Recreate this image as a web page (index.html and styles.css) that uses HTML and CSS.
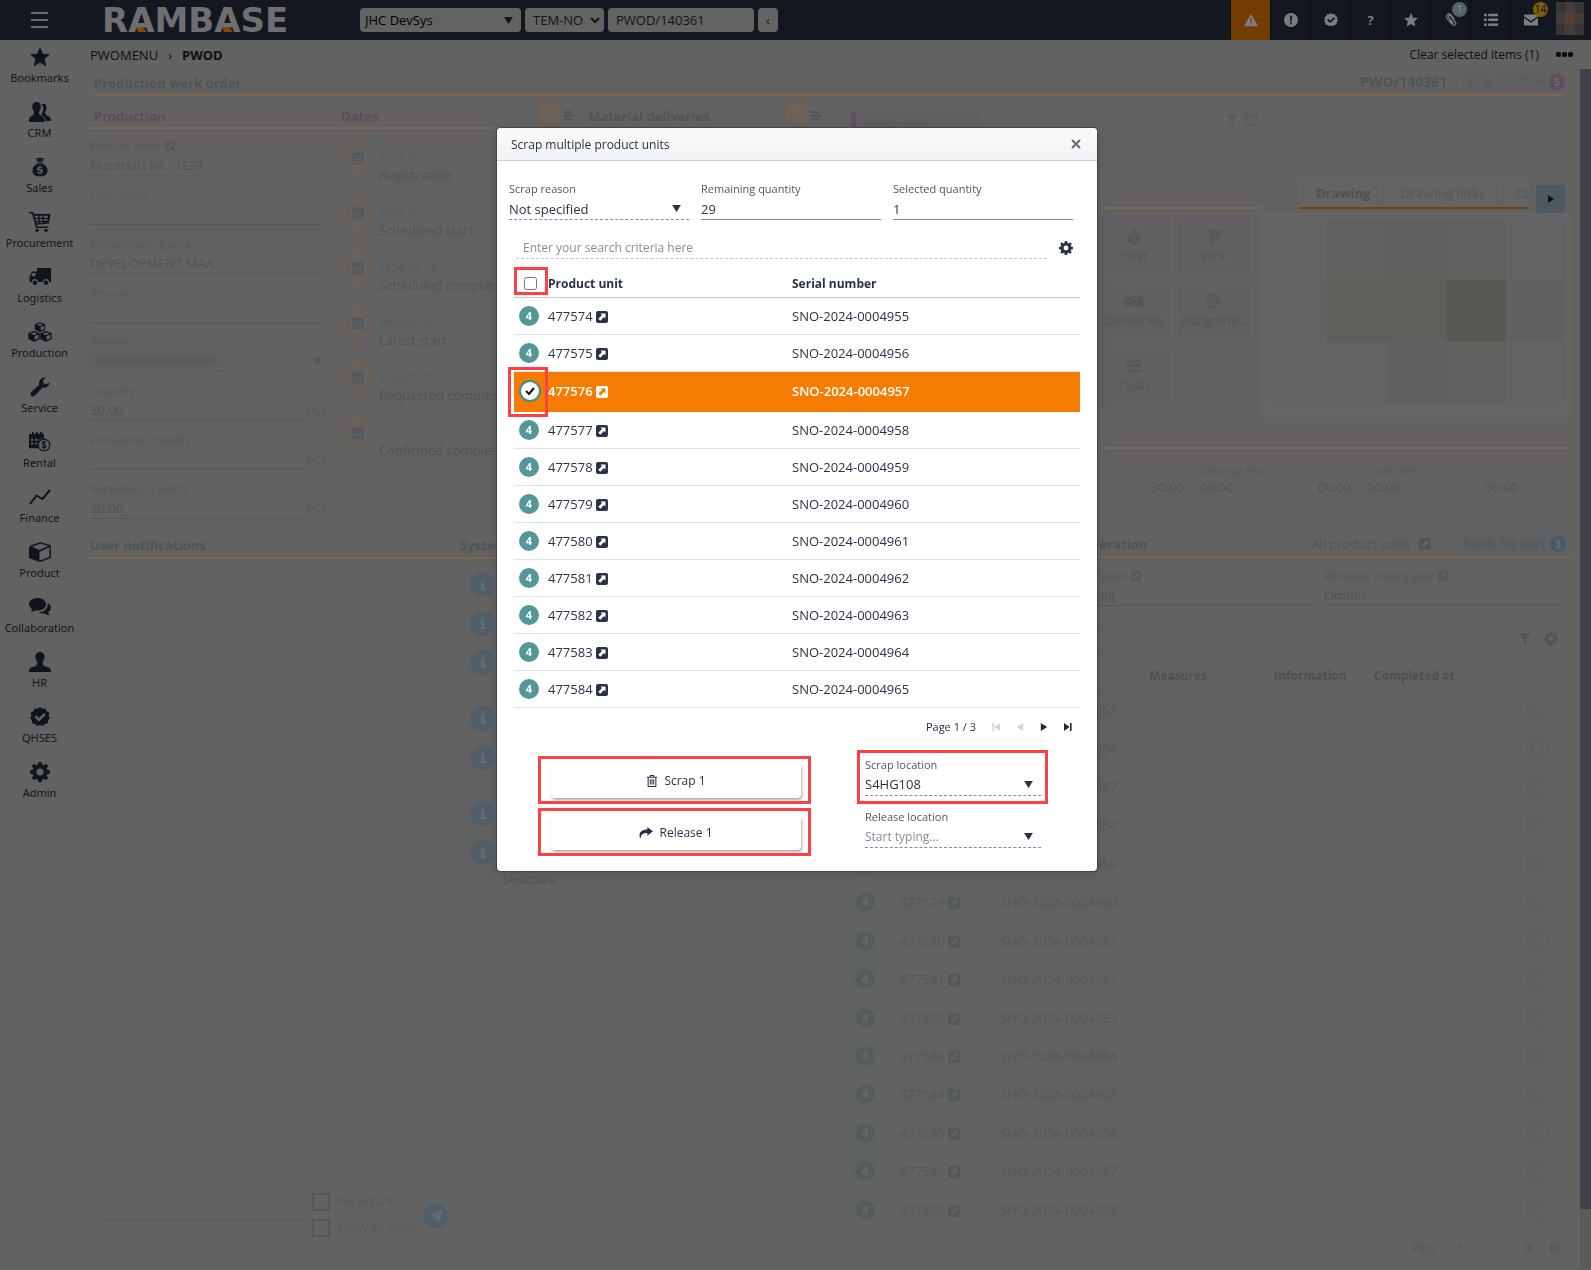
FILE: index.html
```html
<!DOCTYPE html>
<html lang="en">
<head>
<meta charset="utf-8">
<title>PWOD/140361 - RamBase</title>
<link rel="stylesheet" href="styles.css">
</head>
<body>
<svg class="sprite" aria-hidden="true">
  <symbol id="i-star" viewBox="0 0 20 20"><path d="M10 0l2.900 6.700 7.100.6-5.400 4.800 1.700 7.300L10 15.600 3.700 19.400l1.700-7.300L0 7.300l7.100-.6z"/></symbol>
  <symbol id="i-people" viewBox="0 0 22 20"><path d="M12.500 2.500c2.800-2 5.700.5 5 4-.2 1.800-1 2.700-1.300 3.500-.2 2 .3 2.600 1.800 3.500 2.400 1.200 4 1.500 4 5.500h-5.500c0-3-1-4.200-3.500-5.500-.7-.4-.6-1-.2-2 .8-1.500 1.700-3.500 1.500-5.500-.1-1.500-.8-2.600-1.800-3.500z"/><path d="M7.500 0c3 0 4.300 2 4.300 4.500 0 2.600-1.200 4-1.700 5.200-.3 2.300.4 3.200 2.400 4 2.700 1.100 3.200 2.300 3.200 6.300H0c0-4 .6-5.200 3-6.300 1.700-.8 2.200-1.700 2-4C4.300 8.500 3.200 7.100 3.200 4.500 3.200 2 4.600 0 7.500 0z"/></symbol>
  <symbol id="i-bag" viewBox="0 0 16 20"><path d="M3.500.5l2 1 2.500-1 2.500 1 2-1-2 4h-5zM5.300 5.200h5.400v1H5.300z"/><path fill-rule="evenodd" d="M5.300 6.800h5.400C13.500 8 15.500 10.500 15.500 13.500c0 3.500-2.200 6-7.500 6S.5 17 .5 13.500C.5 10.500 2.500 8 5.300 6.800zM8.500 8.500h-1v1C4.500 9.900 4.500 13 7 13.500c2 .4 2.700.8 1.500 1.700-1 .4-1.900 0-2.200-.8l-1.300.5c.4 1 1.300 1.600 2.500 1.700v1h1v-1c3-.4 3.300-3.700.6-4.300-2-.4-2.400-.8-1.600-1.500.9-.5 1.700 0 2 .7l1.200-.6c-.4-.8-1-1.400-2.200-1.500z"/></symbol>
  <symbol id="i-cart" viewBox="0 0 22 20"><path fill-rule="evenodd" d="M0 0h4l.8 2H21.500l-1.700 9.500-12 1.200.5 1.800H19.500V16H7L3 1.500H0zM5.600 3.800l.5 1.900h3.100V3.800zm5 0v1.900h3V3.800zm4.400 0v1.900h3.700l.3-1.900zM6.500 7l.4 1.700h2.300V7zm4.100 0v1.700h3V7zM15 7v1.700h3.200l.3-1.700zM7.300 10l.3 1.200 1.600-.2v-1zm3.300 0v.9l3-.3V10z"/><circle cx="8" cy="18.300" r="1.600"/><circle cx="17" cy="18.300" r="1.600"/></symbol>
  <symbol id="i-truck" viewBox="0 0 22 18"><path fill-rule="evenodd" d="M8 0h14v14h-2a3 3 0 0 0-6 0H9a3 3 0 0 0-6 0H.5V8L3 3.500h5zM3.500 5L2 8.300h4.500V5z"/><circle cx="6" cy="14.700" r="2.300"/><circle cx="17" cy="14.700" r="2.300"/></symbol>
  <symbol id="i-cubes" viewBox="0 0 26 22"><g fill="none" stroke="currentColor" stroke-width="1.400" stroke-linejoin="round"><path d="M13 .8l5 2v5.400l-5 2.300-5-2.300V2.800zM8 2.800l5 2.200 5-2.200M13 5v5.500"/><path d="M6.500 10.500l5.500 2.200v5.600l-5.500 2.700-5.700-2.700v-5.600zM.8 12.700l5.700 2.400 5.500-2.400M6.500 15v6"/><path d="M19.500 10.500l5.700 2.200v5.600L19.500 21 14 18.300v-5.600zM14 12.700l5.500 2.400 5.700-2.400M19.500 15v6"/></g><path d="M8 3l5 2v5L8 8zM1 13l5.500 2v5.500L1 18zM14 13l5.500 2v5.500L14 18z"/></symbol>
  <symbol id="i-wrench" viewBox="0 0 20 20"><path d="M19.500 5.500A5.500 5.500 0 0 1 12.500 10.500L5 18.500c-2.500 2.500-6-.8-3.700-3.400L9.200 8C8 4 11.500-.5 16 .6L13 3.500l.5 3 3 .5z"/></symbol>
  <symbol id="i-rental" viewBox="0 0 22 20"><path fill-rule="evenodd" d="M3 0h1.800v1.800H7V0h1.800v1.800H11V0h1.800v1.800H15v4.500A7 7 0 0 0 8.500 12c-.1 1.800.2 3 .8 4.200H0V2h3zM2 6.800v2h2.200v-2zm4 0v2h2.500v-2zM2 10.500v2h2.200v-2zm4 0v2h1.500v-2z"/><circle cx="15" cy="13" r="5.800" fill="none" stroke="currentColor" stroke-width="1.300"/><path d="M17 11c-.8-1.600-4-1.200-3.600.6.3 1.400 3.400.9 3.600 2.600.2 1.800-3.200 2-4 .3M15 8.800v8.400" fill="none" stroke="currentColor" stroke-width="1.200"/></symbol>
  <symbol id="i-chart" viewBox="0 0 22 16"><path d="M1 15L7.500 6.500l6 3.500L21 1" fill="none" stroke="currentColor" stroke-width="2"/></symbol>
  <symbol id="i-box" viewBox="0 0 22 20"><path d="M10.500 9.300V20L0 16V4.500z"/><path d="M1 4.500L11.500.8l9.700 2.900v11.800l-10.700 4M10.500 9l10.700-5M1 4.500L10.500 9" fill="none" stroke="currentColor" stroke-width="1.500"/></symbol>
  <symbol id="i-chat" viewBox="0 0 22 18"><path d="M8.500 0C13.500 0 17 2.800 17 6.200s-3.500 6.300-8.500 6.300c-.7 0-1.300 0-2-.2C5 13.500 3 14.200 1.500 14c1-1 1.500-2 1.500-3C1 9.800 0 8 0 6.200 0 2.800 3.500 0 8.500 0z"/><path d="M18.500 5c2 .9 3.500 2.600 3.500 4.600 0 1.800-1 3.300-2.700 4.400 0 1.200.5 2 1.500 3-2 .2-3.500-.5-5-1.600-2 .3-4.300 0-6-1.200 5.500-.2 9.700-3.700 8.700-9.200z"/></symbol>
  <symbol id="i-person" viewBox="0 0 22 20"><path d="M11 0c3.200 0 4.500 2.200 4.500 5 0 2.400-1.200 4-1.900 5.500 0 2.500.9 3.200 3 4 3.700 1.200 5.400 1.500 5.400 5.500H0c0-4 1.700-4.300 5.400-5.500 2.100-.8 3-1.500 3-4C7.700 9 6.500 7.400 6.500 5c0-2.800 1.300-5 4.500-5z"/></symbol>
  <symbol id="i-badge" viewBox="0 0 22 22"><path fill-rule="evenodd" d="M11 0l2.800 1.800 3.300-.2 1.200 3.100 2.900 1.700-.7 3.300L22 12l-2.100 2.500-.2 3.400-3.300.8L14 21l-3-1.200L8 21l-2.400-2.300-3.300-.8-.2-3.400L0 12l1.500-2.300-.7-3.300 2.900-1.700 1.200-3.100 3.300.2zM15.500 6.500L9.800 12 7 9.200l-2 2 4.800 4.700 7.700-7.400z"/></symbol>
  <symbol id="i-gear" viewBox="0 0 20 20"><path fill-rule="evenodd" d="M8.300 0h3.400l.5 2.700 1.600.7L16 1.800l2.300 2.300-1.600 2.200.7 1.700 2.600.4v3.300l-2.600.5-.7 1.600 1.600 2.200L16 18.300l-2.200-1.600-1.600.7-.5 2.600H8.300l-.5-2.600-1.600-.7L4 18.300 1.700 16l1.600-2.200-.7-1.600L0 11.700V8.400L2.600 8l.7-1.700L1.700 4.100 4 1.800l2.200 1.600 1.600-.7zM10 6.500a3.500 3.500 0 1 0 0 7 3.500 3.500 0 0 0 0-7z"/></symbol>
  <symbol id="i-link" viewBox="0 0 12 12"><path fill-rule="evenodd" d="M2 0h8a2 2 0 0 1 2 2v8a2 2 0 0 1-2 2H2a2 2 0 0 1-2-2V2a2 2 0 0 1 2-2zM4.500 2.500L6 4 2.300 7.700l2 2L8 6l1.500 1.500v-5z"/></symbol>
  <symbol id="i-cal" viewBox="0 0 14 14"><path fill-rule="evenodd" d="M2.500 0H4v1.500h2V0h2v1.500h2V0h1.500v1.500H13.500V14H.5V1.500h2zM2 5v1.500h10V5zm0 3v1.500h10V8zm0 3v1.500h10V11z"/></symbol>
  <symbol id="i-warn" viewBox="0 0 20 18"><path fill-rule="evenodd" d="M10 0l10 18H0zM8.800 6l.4 6h1.600l.4-6zm.1 7.500v2h2.200v-2z"/></symbol>
  <symbol id="i-excl" viewBox="0 0 20 20"><path fill-rule="evenodd" d="M10 0a10 10 0 1 1 0 20 10 10 0 0 1 0-20zM8.500 4l.5 8h2l.5-8zm.2 9.500v2.500h2.600v-2.500z"/></symbol>
  <symbol id="i-clip" viewBox="0 0 16 18"><path d="M10.500 12.500L5 5.500C3.500 3.500 6 2 7.300 3.500l6.200 8c2 3-1.500 6-4 3.500L3 7C.5 3 5-.5 8 2.500l4.500 6M10.500 12.500c.8 1-.7 1.700-1.300.7L6.500 9.500" fill="none" stroke="currentColor" stroke-width="1.500"/></symbol>
  <symbol id="i-list" viewBox="0 0 20 18"><path d="M0 0h4v3.500H0zM6 0h14v3.500H6zM0 7h4v3.500H0zM6 7h14v3.500H6zM0 14h4v3.500H0zM6 14h14v3.500H6z"/></symbol>
  <symbol id="i-lines" viewBox="0 0 10 10"><path d="M0 0h8v2H0zM0 3.500h10v2H0zM0 7h8v2H0z"/></symbol>
  <symbol id="i-panel" viewBox="0 0 20 20"><path fill-rule="evenodd" d="M0 0h20v20H0zM3 3v3h14V3zM3 8.500v3h14v-3zM3 14v3h14v-3z"/></symbol>
  <symbol id="i-bars" viewBox="0 0 20 20"><path fill-rule="evenodd" d="M0 0h20v20H0zM3 10v7h2.500v-7zM7.500 6v11H10V6zM12 12v5h1.500v-5zM15 3v14h2V3z"/></symbol>
  <symbol id="i-mail" viewBox="0 0 20 16"><path d="M0 0h20v2.500l-10 7-10-7zM0 4.800l10 7 10-7V16H0z"/></symbol>
  <symbol id="i-down" viewBox="0 0 10 8"><path d="M0 0h10L5 8z"/></symbol>
  <symbol id="i-play" viewBox="0 0 8 10"><path d="M0 0l8 5-8 5z"/></symbol>
  <symbol id="i-last" viewBox="0 0 10 10"><path d="M0 0l7 5-7 5zM7.500 0H9.500v10h-2z"/></symbol>
  <symbol id="i-trash" viewBox="0 0 12 14"><path d="M0 2.500h12M4 2.500V.7h4v1.800M1.500 2.500v10.800h9V2.500M4 5v6M6 5v6M8 5v6" fill="none" stroke="currentColor" stroke-width="1.200"/></symbol>
  <symbol id="i-share" viewBox="0 0 16 14"><path d="M9.500 0L16 5l-6.500 5V7C5 6.800 2.500 8.500 1.500 13.500-1 8 1.500 3 9.500 3z"/></symbol>
  <symbol id="i-filter" viewBox="0 0 12 12"><path d="M0 0h12L7.500 5.500V12L4.500 10V5.500z"/></symbol>
  <symbol id="i-open" viewBox="0 0 14 12"><path d="M7 2H1v9h9.500V7M5 7.500L12 1M8.500.8h4v4" fill="none" stroke="currentColor" stroke-width="1.500"/></symbol>
  <symbol id="i-doc" viewBox="0 0 14 14"><path d="M9 4.500V1H1v12h8v-2.500M5 7.500h8M10.500 5L13 7.500 10.500 10M3 4h3" fill="none" stroke="currentColor" stroke-width="1.300"/></symbol>
  <symbol id="i-cars" viewBox="0 0 22 14"><path fill-rule="evenodd" d="M0 6l2-3h6l1 2 1-4h8l2 4 2 1v6h-2v2h-3v-2H9v1H7v-1H3v1H1v-1H0zM11.500 2.500L11 5h7l-1-2.500zM2.500 7v1.500h3V7zM12 7.500V9h2V7.500zM18 7.500V9h2V7.500z"/></symbol>
  <symbol id="i-chev" viewBox="0 0 6 10"><path d="M1 1l4 4-4 4" fill="none" stroke="currentColor" stroke-width="2"/></symbol>
  <symbol id="i-plane" viewBox="0 0 12 12"><path d="M12 0l-2 11-3.500-1.500L5 12V8.500L10 3 3.500 8 0 6.500z"/></symbol>
  <symbol id="i-info" viewBox="0 0 8 12"><path d="M2.500 0h3v2.500h-3zM1 4h4.500v6H7v2H1v-2h1.500V6H1z"/></symbol>
</svg>

<header class="topbar">
  <button class="burger" aria-label="Menu"><span></span><span></span><span></span></button>
  <svg class="logo" viewBox="0 0 240 40" role="img" aria-label="RAMBASE"><text x="0" y="32" class="logo-text">RAMBASE</text><path class="logo-mark" d="M34 27h7l4 5h-9zM120 27h7l4 5h-9z"/></svg>
  <div class="nav-fields">
    <div class="picker"><select class="nav-input nav-system" aria-label="System"><option>JHC DevSys</option></select><svg class="ico tri"><use href="#i-down"/></svg></div>
    <div class="picker"><select class="nav-input nav-db" aria-label="Database"><option>TEM-NO</option></select><svg class="ico caret"><use href="#i-chev"/></svg></div>
    <input class="nav-input nav-path" aria-label="Path" value="PWOD/140361">
    <button class="nav-input nav-back" aria-label="Back">‹</button>
  </div>
  <nav class="tools">
    <button class="tool tool-warn" aria-label="Warnings"><svg class="ico s14"><use href="#i-warn"/></svg></button>
    <button class="tool" aria-label="Alerts"><svg class="ico s14"><use href="#i-excl"/></svg></button>
    <button class="tool" aria-label="Approvals"><svg class="ico s14"><use href="#i-badge"/></svg></button>
    <button class="tool">?</button>
    <button class="tool" aria-label="Favourites"><svg class="ico s14"><use href="#i-star"/></svg></button>
    <button class="tool" aria-label="Attachments"><svg class="ico s14"><use href="#i-clip"/></svg><span class="count count-blue">1</span></button>
    <button class="tool" aria-label="Tasks"><svg class="ico s14"><use href="#i-list"/></svg></button>
    <button class="tool" aria-label="Messages"><svg class="ico s14"><use href="#i-mail"/></svg><span class="count">14</span></button>
    <span class="avatar"><i></i><i class="a2"></i><i></i><i class="a3"></i><i class="a4"></i><i class="a3"></i><i></i><i class="a2"></i><i></i></span>
  </nav>
</header>

<div class="shell">
  <nav class="sidebar">
    <a href="#"><svg class="ico s20"><use href="#i-star"/></svg>Bookmarks</a>
    <a href="#"><svg class="ico s22"><use href="#i-people"/></svg>CRM</a>
    <a href="#"><svg class="ico s20"><use href="#i-bag"/></svg>Sales</a>
    <a href="#"><svg class="ico s22"><use href="#i-cart"/></svg>Procurement</a>
    <a href="#"><svg class="ico s22"><use href="#i-truck"/></svg>Logistics</a>
    <a href="#"><svg class="ico s26"><use href="#i-cubes"/></svg>Production</a>
    <a href="#"><svg class="ico s20"><use href="#i-wrench"/></svg>Service</a>
    <a href="#"><svg class="ico s22"><use href="#i-rental"/></svg>Rental</a>
    <a href="#"><svg class="ico s22"><use href="#i-chart"/></svg>Finance</a>
    <a href="#"><svg class="ico s22"><use href="#i-box"/></svg>Product</a>
    <a href="#"><svg class="ico s22"><use href="#i-chat"/></svg>Collaboration</a>
    <a href="#"><svg class="ico s22"><use href="#i-person"/></svg>HR</a>
    <a href="#"><svg class="ico s22"><use href="#i-badge"/></svg>QHSES</a>
    <a href="#"><svg class="ico s20"><use href="#i-gear"/></svg>Admin</a>
  </nav>

  <main class="main">
    <div class="crumbs">
      <a href="#">PWOMENU</a><span class="sep">›</span><b>PWOD</b>
      <button class="clear">Clear selected items (1)</button>
      <button class="more" aria-label="More"><i></i><i></i><i></i></button>
    </div>
    <div class="viewport">
      <div class="page">
        <div class="page-head"><h1>Production work order</h1><strong>PWO/140361</strong><span class="pill">In production<span class="dot dot-purple">5</span></span></div>
        <div class="halves">
          <section class="left">
            <div class="section-head head-cols">
              <h2 class="indent">Production</h2>
              <h2>Dates<span class="head-icons"><svg class="ico s20 boxed"><use href="#i-panel"/></svg><svg class="ico s10"><use href="#i-lines"/></svg></span></h2>
              <h2 class="last">Material deliveries<span class="head-icons"><svg class="ico s20 boxed"><use href="#i-bars"/></svg><svg class="ico s10"><use href="#i-lines"/></svg></span></h2>
            </div>
            <div class="head-cols">
              <div class="fields">
                <div class="field"><span class="label">Product name <svg class="ico s10"><use href="#i-link"/></svg></span><div class="value faint-line">Materials kit - TEST</div></div>
                <div class="field"><span class="label">Description</span><div class="value"></div></div>
                <div class="field"><span class="label">Manufacturing area</span><div class="value">DEVELOPMENT MAA</div></div>
                <div class="field"><span class="label">Revision</span><div class="value"></div></div>
                <div class="field"><span class="label">Planner</span><div class="value faint-line"><span class="redacted"></span><svg class="ico tri"><use href="#i-down"/></svg></div></div>
                <div class="field unit"><span class="label">Quantity</span><div class="value">30.00</div><em>pcs</em></div>
                <div class="field unit"><span class="label">Forwarded quantity</span><div class="value"></div><em>pcs</em></div>
                <div class="field unit"><span class="label">Remaining quantity</span><div class="value">30.00</div><em>pcs</em></div>
              </div>
              <ol class="timeline">
                <li><span class="node"><svg class="ico s12"><use href="#i-cal"/></svg></span><span><small>2024.06.11</small>Registration</span></li>
                <li><span class="node"><svg class="ico s12"><use href="#i-cal"/></svg></span><span><small>2024.06.11</small>Scheduled start</span></li>
                <li><span class="node"><svg class="ico s12"><use href="#i-cal"/></svg></span><span><small>2024.06.14</small>Scheduled completion</span></li>
                <li><span class="node"><svg class="ico s12"><use href="#i-cal"/></svg></span><span><small>2024.06.21</small>Latest start</span></li>
                <li><span class="node"><svg class="ico s12"><use href="#i-cal"/></svg></span><span><small>2024.06.25</small>Requested completion</span></li>
                <li><span class="node"><svg class="ico s12"><use href="#i-cal"/></svg></span><span><small>-</small>Confirmed completion</span></li>
              </ol>
            </div>
            <div class="section-head notes-cols low"><h2>User notifications</h2><h2>System notifications</h2></div>
            <div class="notes-cols notes">
              <form class="message">
                <input class="message-line" aria-label="Message">
                <div class="checks">
                  <label><input type="checkbox">Important</label>
                  <label><input type="checkbox">Show on print</label>
                </div>
                <button class="send" type="button" aria-label="Send"><svg class="ico s12"><use href="#i-plane"/></svg></button>
              </form>
              <ul class="infos">
                <li><span class="info"><svg class="ico s10"><use href="#i-info"/></svg></span></li>
                <li><span class="info"><svg class="ico s10"><use href="#i-info"/></svg></span></li>
                <li class="tall"><span class="info"><svg class="ico s10"><use href="#i-info"/></svg></span></li>
                <li><span class="info"><svg class="ico s10"><use href="#i-info"/></svg></span></li>
                <li class="tall"><span class="info"><svg class="ico s10"><use href="#i-info"/></svg></span></li>
                <li><span class="info"><svg class="ico s10"><use href="#i-info"/></svg></span></li>
                <li class="tall"><span class="info"><svg class="ico s10"><use href="#i-info"/></svg></span><span class="info-text">Structure</span></li>
              </ul>
            </div>
          </section>

          <section class="right">
            <div class="top-cols">
              <div class="order-top"><div class="order-card">Work order</div><div class="order-icons"><svg class="ico s10"><use href="#i-filter"/></svg><svg class="ico s14"><use href="#i-open"/></svg></div></div>
              <div class="tab-row">
                <div class="tabs"><button class="active">Drawing</button><button>Drawing links</button><button>Cu</button></div>
                <button class="tab-next" aria-label="More tabs"><svg class="ico s10"><use href="#i-play"/></svg></button>
              </div>
              <div class="tiles">
                <button class="tile"><svg class="ico s16"><use href="#i-bag"/></svg>Cost</button>
                <button class="tile"><svg class="ico s16"><use href="#i-cart"/></svg>Pick</button>
                <button class="tile"><svg class="ico s20 wide"><use href="#i-cars"/></svg>Deliveries</button>
                <button class="tile"><svg class="ico s14"><use href="#i-doc"/></svg>Assignme...</button>
                <button class="tile"><svg class="ico s14"><use href="#i-list"/></svg>Tasks</button>
              </div>
              <div class="drawing">
                <i></i><i class="m1"></i><i class="m2"></i><i class="m1"></i><i></i>
                <i></i><i class="m3"></i><i class="m3"></i><i class="m4"></i><i class="m5"></i>
                <i></i><i></i><i class="m5"></i><i class="m1"></i><i></i>
              </div>
            </div>
            <div class="times">
              <div><span class="label">&nbsp;</span><p><span></span><span>30:00</span></p></div>
              <div><span class="label">Cleanup time</span><p><span>00:00</span><span>00:00</span></p></div>
              <div><span class="label">Total time</span><p><span>00:00</span><span>30:00</span></p></div>
            </div>
            <div class="section-head op-head low">
              <h2>Operation</h2>
              <button class="units">All product units <svg class="ico s12"><use href="#i-link"/></svg></button>
              <span class="pill pill-blue">Ready for start<span class="dot dot-blue">3</span></span>
            </div>
            <div class="op-fields">
              <div class="field second"><span class="label">Operation <svg class="ico s10"><use href="#i-link"/></svg></span><div class="value">Kitting</div></div>
              <div class="field"><span class="label">Resource activity plan <svg class="ico s10"><use href="#i-link"/></svg></span><div class="value">Ommis</div></div>
            </div>
            <div class="units-panel">
              <div class="unit-search"><input aria-label="Search units"><svg class="ico s12"><use href="#i-filter"/></svg><svg class="ico s14"><use href="#i-gear"/></svg></div>
              <table class="units-table">
                <colgroup><col class="c1"><col class="c2"><col class="c3"><col class="c4"><col class="c5"><col><col class="c7"></colgroup>
                <thead><tr><th></th><th></th><th></th><th>Measures</th><th>Information</th><th>Completed at</th><th></th></tr></thead>
                <tbody>
                <tr><td><span class="st">4</span></td><td>477574 <svg class="ico s12"><use href="#i-link"/></svg></td><td>SNO-2024-0004955</td><td colspan="3"></td><td><span class="go"><svg class="ico s10"><use href="#i-chev"/></svg></span></td></tr>
                <tr><td><span class="st">4</span></td><td>477575 <svg class="ico s12"><use href="#i-link"/></svg></td><td>SNO-2024-0004956</td><td colspan="3"></td><td><span class="go"><svg class="ico s10"><use href="#i-chev"/></svg></span></td></tr>
                <tr><td><span class="st">4</span></td><td>477576 <svg class="ico s12"><use href="#i-link"/></svg></td><td>SNO-2024-0004957</td><td colspan="3"></td><td><span class="go"><svg class="ico s10"><use href="#i-chev"/></svg></span></td></tr>
                <tr><td><span class="st">4</span></td><td>477577 <svg class="ico s12"><use href="#i-link"/></svg></td><td>SNO-2024-0004958</td><td colspan="3"></td><td><span class="go"><svg class="ico s10"><use href="#i-chev"/></svg></span></td></tr>
                <tr><td><span class="st">4</span></td><td>477578 <svg class="ico s12"><use href="#i-link"/></svg></td><td>SNO-2024-0004959</td><td colspan="3"></td><td><span class="go"><svg class="ico s10"><use href="#i-chev"/></svg></span></td></tr>
                <tr><td><span class="st">4</span></td><td>477579 <svg class="ico s12"><use href="#i-link"/></svg></td><td>SNO-2024-0004960</td><td colspan="3"></td><td><span class="go"><svg class="ico s10"><use href="#i-chev"/></svg></span></td></tr>
                <tr><td><span class="st">4</span></td><td>477580 <svg class="ico s12"><use href="#i-link"/></svg></td><td>SNO-2024-0004961</td><td colspan="3"></td><td><span class="go"><svg class="ico s10"><use href="#i-chev"/></svg></span></td></tr>
                <tr><td><span class="st">4</span></td><td>477581 <svg class="ico s12"><use href="#i-link"/></svg></td><td>SNO-2024-0004962</td><td colspan="3"></td><td><span class="go"><svg class="ico s10"><use href="#i-chev"/></svg></span></td></tr>
                <tr><td><span class="st">4</span></td><td>477582 <svg class="ico s12"><use href="#i-link"/></svg></td><td>SNO-2024-0004963</td><td colspan="3"></td><td><span class="go"><svg class="ico s10"><use href="#i-chev"/></svg></span></td></tr>
                <tr><td><span class="st">4</span></td><td>477583 <svg class="ico s12"><use href="#i-link"/></svg></td><td>SNO-2024-0004964</td><td colspan="3"></td><td><span class="go"><svg class="ico s10"><use href="#i-chev"/></svg></span></td></tr>
                <tr><td><span class="st">4</span></td><td>477584 <svg class="ico s12"><use href="#i-link"/></svg></td><td>SNO-2024-0004965</td><td colspan="3"></td><td><span class="go"><svg class="ico s10"><use href="#i-chev"/></svg></span></td></tr>
                <tr><td><span class="st">4</span></td><td>477585 <svg class="ico s12"><use href="#i-link"/></svg></td><td>SNO-2024-0004966</td><td colspan="3"></td><td><span class="go"><svg class="ico s10"><use href="#i-chev"/></svg></span></td></tr>
                <tr><td><span class="st">4</span></td><td>477586 <svg class="ico s12"><use href="#i-link"/></svg></td><td>SNO-2024-0004967</td><td colspan="3"></td><td><span class="go"><svg class="ico s10"><use href="#i-chev"/></svg></span></td></tr>
                <tr><td><span class="st">4</span></td><td>477587 <svg class="ico s12"><use href="#i-link"/></svg></td><td>SNO-2024-0004968</td><td colspan="3"></td><td><span class="go"><svg class="ico s10"><use href="#i-chev"/></svg></span></td></tr>
                </tbody>
              </table>
              <div class="pager"><span>Page 1 / 3</span><button class="off flip" aria-label="First"><svg class="ico s8"><use href="#i-last"/></svg></button><button class="off flip" aria-label="Previous"><svg class="ico s8"><use href="#i-play"/></svg></button><button aria-label="Next"><svg class="ico s8"><use href="#i-play"/></svg></button><button aria-label="Last"><svg class="ico s8"><use href="#i-last"/></svg></button></div>
            </div>
          </section>
        </div>
      </div>
      <div class="scrollbar"><div class="thumb"></div></div>
    </div>
  </main>
</div>

<div class="overlay">
  <div class="dialog" role="dialog" aria-labelledby="dlg-title">
    <div class="dialog-head"><span id="dlg-title">Scrap multiple product units</span><button class="close" aria-label="Close"><svg viewBox="0 0 10 10"><path d="M1 1l8 8M9 1l-8 8"/></svg></button></div>
    <div class="dialog-body">
      <div class="summary">
        <div class="d-field dashed"><label for="reason">Scrap reason</label><div class="picker"><select id="reason"><option>Not specified</option></select><svg class="ico tri"><use href="#i-down"/></svg></div></div>
        <div class="d-field"><label for="remaining">Remaining quantity</label><input id="remaining" value="29" readonly></div>
        <div class="d-field"><label for="selected">Selected quantity</label><input id="selected" value="1" readonly></div>
      </div>
      <div class="search"><input placeholder="Enter your search criteria here" aria-label="Search"><button aria-label="Settings"><svg class="ico s14"><use href="#i-gear"/></svg></button></div>
      <table class="pick">
        <colgroup><col class="p1"><col class="p2"><col></colgroup>
        <thead><tr><th><input type="checkbox" aria-label="Select all"><span class="mark mark-all"></span></th><th>Product unit</th><th>Serial number</th></tr></thead>
        <tbody>
        <tr><td><span class="st">4</span></td><td>477574 <svg class="ico s12"><use href="#i-link"/></svg></td><td>SNO-2024-0004955</td></tr>
        <tr><td><span class="st">4</span></td><td>477575 <svg class="ico s12"><use href="#i-link"/></svg></td><td>SNO-2024-0004956</td></tr>
        <tr class="chosen"><td><span class="st"><svg viewBox="0 0 10 8"><path d="M1 4l3 3 5-6"/></svg></span><span class="mark mark-row"></span></td><td>477576 <svg class="ico s12"><use href="#i-link"/></svg></td><td>SNO-2024-0004957</td></tr>
        <tr><td><span class="st">4</span></td><td>477577 <svg class="ico s12"><use href="#i-link"/></svg></td><td>SNO-2024-0004958</td></tr>
        <tr><td><span class="st">4</span></td><td>477578 <svg class="ico s12"><use href="#i-link"/></svg></td><td>SNO-2024-0004959</td></tr>
        <tr><td><span class="st">4</span></td><td>477579 <svg class="ico s12"><use href="#i-link"/></svg></td><td>SNO-2024-0004960</td></tr>
        <tr><td><span class="st">4</span></td><td>477580 <svg class="ico s12"><use href="#i-link"/></svg></td><td>SNO-2024-0004961</td></tr>
        <tr><td><span class="st">4</span></td><td>477581 <svg class="ico s12"><use href="#i-link"/></svg></td><td>SNO-2024-0004962</td></tr>
        <tr><td><span class="st">4</span></td><td>477582 <svg class="ico s12"><use href="#i-link"/></svg></td><td>SNO-2024-0004963</td></tr>
        <tr><td><span class="st">4</span></td><td>477583 <svg class="ico s12"><use href="#i-link"/></svg></td><td>SNO-2024-0004964</td></tr>
        <tr><td><span class="st">4</span></td><td>477584 <svg class="ico s12"><use href="#i-link"/></svg></td><td>SNO-2024-0004965</td></tr>
        </tbody>
      </table>
      <div class="pager"><span>Page 1 / 3</span><button class="off flip" aria-label="First"><svg class="ico s8"><use href="#i-last"/></svg></button><button class="off flip" aria-label="Previous"><svg class="ico s8"><use href="#i-play"/></svg></button><button aria-label="Next"><svg class="ico s8"><use href="#i-play"/></svg></button><button aria-label="Last"><svg class="ico s8"><use href="#i-last"/></svg></button></div>
      <div class="actions">
        <div class="action"><button><svg class="ico s12"><use href="#i-trash"/></svg>Scrap 1</button><span class="mark mark-btn"></span></div>
        <div class="d-field dashed"><label for="sloc">Scrap location</label><div class="picker"><select id="sloc"><option>S4HG108</option></select><svg class="ico tri"><use href="#i-down"/></svg></div><span class="mark mark-loc"></span></div>
        <div class="action"><button><svg class="ico s14"><use href="#i-share"/></svg>Release 1</button><span class="mark mark-btn"></span></div>
        <div class="d-field dashed"><label for="rloc">Release location</label><div class="picker"><input id="rloc" placeholder="Start typing..."><svg class="ico tri"><use href="#i-down"/></svg></div></div>
      </div>
    </div>
  </div>
</div>
</body>
</html>
```
FILE: styles.css
```css
:root {
  --bg: #626262;
  --bar: #13171f;
  --ink: #10141d;
  --dim: #515357;
  --dimmer: #56585b;
  --rule: #7e664f;
  --navy: #283248;
  --red: #fb4143;
}
* { box-sizing: border-box; }
body { margin: 0; min-height: 100vh; background: var(--bg); color: var(--dim); font: 13px/18px "Open Sans", "Noto Sans", sans-serif; }
button, input, select { font: inherit; color: inherit; margin: 0; padding: 0; border: 0; border-radius: 0; background: none; outline: 0; }
select { appearance: none; width: 100%; }
input::placeholder { color: inherit; opacity: 1; }
h1, h2, p, ol, ul { margin: 0; padding: 0; list-style: none; }
h1, h2 { font-size: 13px; line-height: 18px; }
a { color: inherit; text-decoration: none; }
table { border-collapse: collapse; table-layout: fixed; width: 100%; }
th, td { padding: 0; text-align: left; }
th { font-size: 12px; }
.sprite { position: absolute; width: 0; height: 0; }
.ico { fill: currentColor; flex: none; width: 12px; height: 12px; }
.s8 { width: 8px; height: 8px; }
.s10 { width: 10px; height: 10px; }
.s12 { width: 12px; height: 12px; }
.s14 { width: 14px; height: 14px; }
.s16 { width: 16px; height: 16px; }
.s20 { width: 20px; height: 20px; }
.s22 { width: 22px; height: 22px; }
.s26 { width: 26px; height: 22px; }
.tri { width: 9px; height: 7px; }
.picker { display: flex; align-items: center; position: relative; }
.picker .ico { position: absolute; right: 8px; pointer-events: none; }

/* Top bar */
.topbar { display: flex; align-items: center; height: 40px; background: var(--bar); color: #7d7d7d; }
.burger { display: flex; flex-direction: column; gap: 5px; width: 78px; align-items: center; }
.burger span { width: 17px; height: 2px; background: #6c6c6c; }
.logo { width: 240px; height: 40px; margin-left: 24px; }
.logo-text { font: bold 34px "DejaVu Sans", sans-serif; fill: #6f6f6f; }
.logo-mark { fill: #80480d; }
.nav-fields { display: flex; gap: 4px; margin-left: 18px; color: #10131a; }
.nav-input { height: 24px; border-radius: 4px; background: #636363; padding: 0 6px; }
.nav-system { width: 161px; padding-left: 5px; color: #000; }
.nav-db { width: 79px; padding-left: 8px; }
.nav-path { width: 146px; padding-left: 8px; }
.nav-back { width: 20px; }
.nav-fields .caret { width: 8px; height: 10px; right: 5px; transform: rotate(90deg); }
.tools { display: flex; margin-left: auto; height: 40px; }
.tool { position: relative; display: flex; align-items: center; justify-content: center; width: 40px; border-left: 1px solid #0a0d12; font-weight: bold; }
.tool-warn { background: #733c00; }
.count { position: absolute; right: 2px; top: 2px; width: 15px; height: 15px; border-radius: 50%; background: #7b5e0b; color: #0c0c0c; font: 10px/15px "Open Sans", sans-serif; text-align: center; }
.count-blue { background: #53646f; color: #8b969d; right: 3px; }
.avatar { display: grid; grid-template-columns: repeat(3, 1fr); width: 28px; height: 33px; margin: 2px 7px 0 6px; background: #373635; }
.a2 { background: #423d3b; }
.a3 { background: #403d3c; }
.a4 { background: #5a3c30; }

/* Sidebar */
.shell { display: flex; }
.sidebar { width: 79px; flex: none; padding-top: 6px; color: var(--ink); font: 11px/18px "Noto Sans", sans-serif; }
.sidebar a { display: flex; flex-direction: column; align-items: center; height: 55px; }
.sidebar .ico { height: 22px; padding: 1px 0; margin-bottom: 1px; }

/* Breadcrumb */
.main { flex: 1; min-width: 0; }
.crumbs { display: flex; align-items: center; height: 29px; padding: 0 18px 0 11px; color: #0b0e14; }
.sep { margin: 0 10px; }
.clear { margin-left: auto; font-size: 12px; }
.more { display: flex; gap: 1px; margin-left: 17px; }
.more i { width: 5px; height: 5px; border-radius: 2px; background: #08090c; }
.viewport { display: flex; }
.page { flex: 1; min-width: 0; padding: 0 10px 0 9px; }
.scrollbar { width: 11px; background: #5b5b5d; }
.thumb { height: 95%; background: #3f424a; }

.page-head { display: flex; align-items: center; height: 27px; margin-left: 6px; margin-right: 5px; border-bottom: 2px solid var(--rule); }
.page-head h1 { padding-top: 2px; }
.page-head strong { margin-left: auto; margin-right: 14px; font-size: 14px; }
.pill { display: flex; align-items: center; gap: 4px; height: 20px; padding-left: 8px; border-radius: 10px; background: #606063; color: #57585c; font-size: 12px; white-space: nowrap; }
.pill-blue { background: #5d6164; color: #50555a; }
.dot { width: 16px; height: 16px; border-radius: 50%; text-align: center; font: bold 11px/16px "Open Sans", sans-serif; color: #6b6b6b; }
.dot-purple { background: #604d60; }
.dot-blue { background: #475968; }
.halves { display: grid; grid-template-columns: 1fr 1fr; }
.left { display: flex; flex-direction: column; }
.section-head { height: 38px; align-items: center; border-bottom: 2px solid var(--rule); }
.head-cols { display: grid; grid-template-columns: 253px 247px 1fr; }
.head-cols.section-head { height: 33px; padding-top: 8px; }
.section-head.low { padding-top: 12px; }
.section-head h2 { display: flex; align-items: center; }
.indent { padding-left: 6px; }
.head-icons { display: flex; gap: 4px; align-items: center; height: 18px; margin-left: auto; margin-right: 14px; }
.last .head-icons { margin-right: 8px; }
.boxed { color: #756150; margin-top: -5px; }
.fields { padding: 0 19px 0 2px; }
.field { height: 49px; padding-top: 8px; }
.label { display: block; color: var(--dimmer); font-size: 11px; }
.value { display: flex; align-items: center; justify-content: space-between; height: 21px; border-bottom: 1px solid #555659; }
.faint-line { border-color: #5d5d5e; }
.redacted { width: 128px; height: 7px; background: #575a60; filter: blur(3px); }
.unit { display: grid; grid-template-columns: 1fr 16px; column-gap: 2px; grid-template-rows: 18px 21px; }
.unit .label { grid-column: 1 / 3; }
.unit em { font-style: normal; color: var(--dimmer); }
.timeline { padding: 0 0 0 3px; overflow: hidden; }
.timeline li { position: relative; display: flex; align-items: flex-start; gap: 7px; height: 55px; padding-top: 15px; white-space: nowrap; }
.timeline li::before { content: ""; position: absolute; left: 13px; top: 0; height: 55px; border-left: 2px dotted #75604e; }
.timeline small { display: block; font-size: 11px; line-height: 16px; color: #595a5c; }
.timeline li > span:last-child { padding-top: 6px; }
.node { position: relative; display: flex; align-items: center; justify-content: center; width: 28px; height: 28px; border: 2px solid #75604e; border-radius: 50%; background: var(--bg); color: #535558; }

/* Notifications */
.notes-cols { display: grid; grid-template-columns: 370px 1fr; padding-left: 2px; }
.notes { flex: 1; }
.message { align-self: end; display: flex; align-items: center; margin: 0 12px 22px 8px; height: 65px; border-top: 1px dashed #5a5b5c; color: #575859; font-size: 12px; }
.message-line { flex: 1; align-self: flex-start; min-width: 0; height: 24px; margin-top: 14px; border-bottom: 1px solid #57585a; }
.checks { display: grid; gap: 8px; margin-left: 9px; }
.checks label { display: flex; align-items: center; gap: 7px; white-space: nowrap; }
.checks input { appearance: none; width: 18px; height: 18px; border: 2px solid #565759; }
.send, .info { display: flex; align-items: center; justify-content: center; width: 25px; height: 25px; border-radius: 50%; background: #4f5e69; color: #696d71; flex: none; }
.send { margin-left: 8px; }
.infos { padding: 13px 0 0 10px; }
.infos li { display: flex; gap: 8px; height: 39px; }
.infos .tall { height: 56px; }
.info-text { align-self: flex-end; padding-bottom: 7px; font-size: 12px; }

/* Right half */
.top-cols { display: grid; grid-template-columns: 1fr 308px; grid-template-rows: 117px 1fr; height: 353px; border-bottom: 2px solid var(--rule); }
.order-top { display: flex; align-items: flex-start; justify-content: space-between; height: 113px; padding: 16px 4px 0 22px; border-bottom: 2px solid var(--rule); color: #57585b; }
.order-card { width: 131px; height: 80px; padding: 5px 9px; border-left: 5px solid #5f4d61; background: #5f5f61; font-size: 12px; }
.order-icons { display: flex; gap: 7px; align-items: center; padding-top: 1px; }
.tab-row { display: flex; align-items: flex-end; justify-content: space-between; padding: 0 5px 4px 37px; }
.tabs { display: flex; flex: 1; overflow: hidden; height: 31px; margin-right: 7px; border-bottom: 2px solid #7a4208; background: #646464; }
.tabs button { flex: none; padding: 0 12px 0 17px; color: #56585b; font-weight: 600; border-right: 1px solid #5f5f5f; }
.tabs .active { color: #4e5054; font-weight: bold; }
.tab-next { display: flex; align-items: center; justify-content: center; width: 29px; height: 28px; margin-bottom: -4px; border-radius: 3px; background: #50585f; color: #0a0d12; }
.tab-next .ico { width: 6px; height: 8px; }
.tiles { display: grid; grid-template-columns: 72px 72px; grid-auto-rows: 57px; gap: 8px; justify-content: end; padding: 5px 12px 0 0; }
.tile { display: flex; flex-direction: column; align-items: center; justify-content: center; gap: 3px; background: #606062; border-radius: 3px; color: #535558; }
.wide { height: 14px; }
.drawing { display: grid; grid-template-columns: 1fr 1fr 1fr 1fr 1fr; margin-bottom: 29px; padding: 6px 5px 16px 6px; background: #656565; }
.drawing i { background: #636363; }
.drawing .m1 { background: #626160; }
.drawing .m2 { background: #61605e; }
.drawing .m3 { background: #5f5e5b; }
.drawing .m4 { background: #595853; }
.drawing .m5 { background: #615f60; }
.times { display: grid; grid-template-columns: repeat(3, 151px); gap: 16px; justify-content: end; height: 71px; padding: 12px 52px 0 0; }
.times .label { height: 17px; }
.times p { display: flex; justify-content: space-between; }
.op-head { display: flex; padding-left: 252px; }
.units { display: flex; align-items: center; gap: 8px; margin-left: auto; margin-right: 24px; }
.op-head .pill { margin-right: 4px; gap: 5px; }
.op-fields { display: grid; grid-template-columns: repeat(3, 1fr); gap: 12px; padding-right: 11px; margin-top: 1px; }
.op-fields .second { grid-column: 2; }
.units-panel { margin-left: 4px; padding: 17px 7px 3px 8px; background: #606360; }
.unit-search { display: flex; align-items: center; gap: 13px; padding-right: 5px; }
.unit-search input { flex: 1; height: 27px; border: 1px solid #5d605e; border-radius: 4px; }
.units-table { height: 577px; color: #54585a; }
.units-table th { height: 38px; padding-top: 10px; border-bottom: 1px solid #5b5e5c; color: #4c5053; }
.c1 { width: 59px; } .c2 { width: 100px; } .c3 { width: 149px; } .c4 { width: 125px; } .c5 { width: 100px; } .c7 { width: 46px; }
.st { display: block; width: 20px; height: 20px; border-radius: 50%; background: #535d5c; color: #666b69; text-align: center; font: bold 11px/20px "Open Sans", sans-serif; }
.units-table .st { margin-left: 14px; }
td .ico { vertical-align: -2px; }
.label .ico { vertical-align: -1px; }
.go { display: flex; align-items: center; justify-content: center; width: 24px; height: 24px; margin-left: 8px; border-radius: 50%; background: #5e6061; color: #75604e; }
.pager { display: flex; align-items: center; justify-content: flex-end; gap: 16px; height: 37px; padding-right: 8px; font-size: 11px; }
.pager button { display: flex; }
.pager .off { opacity: .2; }
.pager .flip { transform: rotate(180deg); }
.units-panel .pager { padding-right: 5px; color: #555856; }

/* Dialog */
.overlay { position: fixed; inset: 0; padding: 128px 0 0 3px; display: flex; justify-content: center; align-items: flex-start; }
.dialog { width: 600px; border-radius: 4px; background: #fff; color: var(--navy); box-shadow: 0 0 0 1px #444, 0 2px 10px #4448; }
.dialog-head { display: flex; align-items: center; justify-content: space-between; height: 33px; padding: 0 16px 0 14px; border-bottom: 1px solid #c9cdd1; border-radius: 4px 4px 0 0; background: linear-gradient(#fafbfb, #f1f3f5); }
.dialog-head span { padding-top: 2px; font-size: 12px; }
.close svg { display: block; width: 10px; height: 10px; fill: none; stroke: #626b7b; stroke-width: 2; }
.dialog-body { padding: 19px 17px 21px 17px; }
.summary { display: grid; grid-template-columns: repeat(3, 180px); gap: 12px; margin-left: -5px; }
.d-field { position: relative; }
.d-field label { display: block; color: #4c566a; font-size: 11px; line-height: 18px; }
.d-field > input, .d-field .picker { width: 100%; height: 22px; border-bottom: 1px solid #7d8da3; }
.d-field > input { display: block; }
.d-field.dashed .picker { border-bottom-style: dashed; }
.d-field input { width: 100%; }
.d-field input::placeholder { color: #868d99; font-size: 12px; }
.search { display: flex; margin: 17px 7px 0 2px; }
.search input { flex: 1; height: 22px; padding-left: 7px; border-bottom: 1px dashed #c0c5cc; font-size: 12px; }
.search input::placeholder { color: #868d99; }
.search button { display: flex; align-items: center; margin-left: 12px; }
.pick { margin-top: 8px; }
.pick th { position: relative; height: 30px; padding-top: 4px; border-bottom: 1px solid #c3cad2; }
.pick td { position: relative; height: 37px; border-bottom: 1px solid #dfe3e8; }
.pick th input { display: block; width: 13px; height: 13px; margin-left: 10px; }
.p1 { width: 34px; } .p2 { width: 244px; }
.pick .st { margin-left: 5px; background: #559797; color: #fff; }
.pick .chosen { background: #f57c00; color: #fff; font-weight: 600; }
.pick .chosen td { height: 40px; border-color: #f57c00; }
.pick .chosen .st { width: 22px; height: 22px; padding: 4px; border: 2px solid #3f8f8f; background: #fff; }
.chosen .st svg { display: block; width: 10px; height: 10px; fill: none; stroke: #111; stroke-width: 2; }
.dialog .pager { height: 38px; color: #1f2a40; }
.actions { display: grid; grid-template-columns: 250px 176px; column-gap: 64px; row-gap: 10px; margin: 10px 0 0 37px; }
.action { position: relative; padding-top: 8px; }
.action button { display: flex; align-items: center; justify-content: center; gap: 6px; width: 100%; height: 34px; border-radius: 4px; background: #fff; box-shadow: 1px 2px 3px #a3a9b5; font-size: 12px; }

/* Highlight frames */
.mark { position: absolute; border: 3px solid var(--red); pointer-events: none; z-index: 1; }
.mark-all { left: 0; top: 0; width: 34px; height: 28px; }
.mark-row { left: -6px; top: -5px; width: 40px; height: 50px; }
.mark-btn { left: -13px; right: -10px; top: 0; bottom: -6px; }
.mark-loc { left: -8px; right: -7px; top: -6px; bottom: -6px; }
```
